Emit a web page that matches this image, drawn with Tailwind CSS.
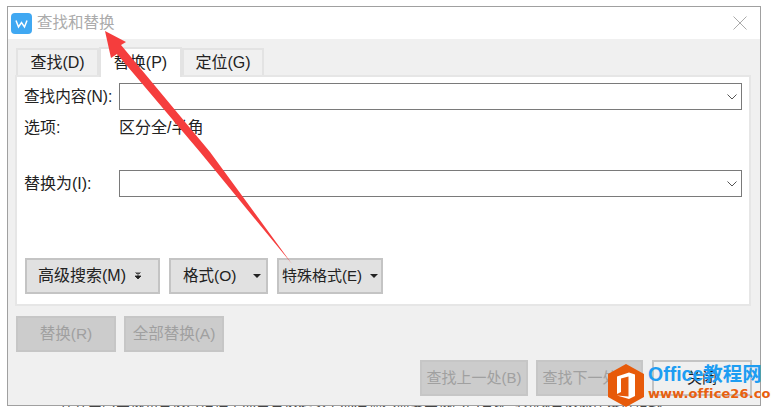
<!DOCTYPE html>
<html lang="zh-CN">
<head>
<meta charset="UTF-8">
<title>查找和替换</title>
<script src="https://cdn.jsdelivr.net/npm/@tailwindcss/browser@4"></script>
</head>
<body class="bg-white">
<div class="relative w-[771px] h-[413px] overflow-hidden pt-[6px] pl-[7px] font-['Liberation_Sans','Noto_Sans_CJK_SC',sans-serif] text-[16px] text-[#222]">

  <!-- dialog -->
  <div class="w-[754px] h-[400px] border border-[#a0a0a0] bg-[#f0f0f0] flex flex-col">
    <!-- title bar -->
    <div class="h-[32px] bg-white flex items-center pl-[3px] pr-[13px] shrink-0">
      <svg class="w-[21px] h-[21px]" viewBox="0 0 21 21">
        <rect width="21" height="21" rx="4" fill="#40a8f2"/>
        <path d="M5 7.5 L7.5 14 L10.5 9.5 L13.5 14 L16 7.5" fill="none" stroke="#fff" stroke-width="1.5"/>
      </svg>
      <span class="ml-[5px] text-[#ababab] text-[15.5px]">查找和替换</span>
      <svg class="ml-auto w-[14px] h-[14px]" viewBox="0 0 14 14">
        <path d="M0.5 0.5 L13.5 13.5 M13.5 0.5 L0.5 13.5" stroke="#aaa" stroke-width="1" fill="none"/>
      </svg>
    </div>

    <!-- tabs -->
    <div class="flex pl-[8px] mt-[8px] h-[28px] shrink-0">
      <div class="w-[83px] mt-[1px] bg-[#f0f0f0] border-2 border-b-0 border-[#e3e3e3] flex items-center justify-center">查找(D)</div>
      <div class="w-[83px] bg-white border-2 border-b-0 border-[#e3e3e3] flex items-center justify-center relative z-10 h-[30px]">替换(P)</div>
      <div class="w-[82px] mt-[1px] bg-[#f0f0f0] border-2 border-b-0 border-[#e3e3e3] flex items-center justify-center">定位(G)</div>
    </div>

    <!-- tab panel -->
    <div class="ml-[7px] w-[736px] h-[231px] bg-white border-2 border-[#e6e6e6] pl-[7px] pr-[7px] pt-[6px] shrink-0">
      <div class="flex items-center h-[27px]">
        <span class="w-[95px] shrink-0 whitespace-nowrap text-[15.6px]">查找内容(N):</span>
        <div class="flex-1 h-full border border-[#7a7a7a] flex items-center justify-end pr-[4px]">
          <svg class="w-[10px] h-[6px]" viewBox="0 0 10 6"><path d="M0.5 0.5 L5 5 L9.5 0.5" fill="none" stroke="#555"/></svg>
        </div>
      </div>
      <div class="flex items-center h-[20px] mt-[8px]">
        <span class="w-[95px] shrink-0">选项:</span>
        <span>区分全/半角</span>
      </div>
      <div class="flex items-center h-[27px] mt-[32px]">
        <span class="w-[95px] shrink-0">替换为(I):</span>
        <div class="flex-1 h-full border border-[#7a7a7a] flex items-center justify-end pr-[4px]">
          <svg class="w-[10px] h-[6px]" viewBox="0 0 10 6"><path d="M0.5 0.5 L5 5 L9.5 0.5" fill="none" stroke="#555"/></svg>
        </div>
      </div>
      <div class="flex mt-[61px] gap-[9px] pl-[1px] h-[36px]">
        <div class="w-[135px] bg-[#e1e1e1] border-2 border-[#c4c4c4] flex items-center pl-[11px]">
          <span class="whitespace-nowrap">高级搜索(M)</span>
          <svg class="w-[6px] h-[7px] ml-[9px] mb-[2px]" viewBox="0 0 6 7"><path d="M0 0 H6 M1 1.5 H5 M2 3 H4 M0 4 H6 L3 7 Z" stroke="#222" stroke-width="0.8" fill="#222"/></svg>
        </div>
        <div class="w-[99px] bg-[#e1e1e1] border-2 border-[#c4c4c4] flex items-center pl-[12px]">
          <span class="text-[15.5px] whitespace-nowrap">格式(O)</span>
          <svg class="w-[8px] h-[4px] ml-[17px]" viewBox="0 0 8 4"><path d="M0 0 H8 L4 4 Z" fill="#222"/></svg>
        </div>
        <div class="w-[106px] bg-[#e1e1e1] border-2 border-[#c4c4c4] flex items-center pl-[3px]">
          <span class="text-[15px] whitespace-nowrap">特殊格式(E)</span>
          <svg class="w-[8px] h-[4px] ml-[8px]" viewBox="0 0 8 4"><path d="M0 0 H8 L4 4 Z" fill="#222"/></svg>
        </div>
      </div>
    </div>

    <!-- lower buttons -->
    <div class="flex gap-[8px] pl-[8px] mt-[10px] h-[36px] shrink-0 text-[#a0a0a0] text-[15.5px]">
      <div class="w-[100px] bg-[#cccccc] border-2 border-[#c6c6c6] flex items-center justify-center">替换(R)</div>
      <div class="w-[100px] bg-[#cccccc] border-2 border-[#c6c6c6] flex items-center justify-center">全部替换(A)</div>
    </div>
    <div class="flex justify-end pr-[8px] mt-[8px] h-[36px] shrink-0 text-[#a0a0a0] text-[15px]">
      <div class="w-[108px] bg-[#cccccc] border-2 border-[#c6c6c6] flex items-center justify-center whitespace-nowrap">查找上一处(B)</div>
      <div class="w-[107px] ml-[8px] bg-[#cccccc] border-2 border-[#c6c6c6] flex items-center justify-center whitespace-nowrap">查找下一处(F)</div>
      <div class="w-[100px] ml-[9px] bg-[#f0f0f0] border-2 border-[#c4c4c4] flex items-center justify-center text-[#222]">关闭</div>
    </div>
  </div>

  <!-- text of the page behind, only its lowest pixels show under the dialog -->
  <div class="absolute left-[60px] top-[392px] h-[15px] overflow-hidden text-[14px] leading-[18px] text-[#444] whitespace-nowrap -z-10">在弹出的查找和替换对话框中点击替换选项卡然后输入需要查找的内容即可完成替换操作设置格式</div>

  <!-- red annotation arrow -->
  <svg class="absolute left-0 top-0 pointer-events-none z-20" width="771" height="413" viewBox="0 0 771 413">
    <polygon points="105,31 126,42 121,45 210,152 292,264 200,152 117,54 111,58" fill="#f53d3d"/>
  </svg>

  <!-- watermark -->
  <div class="absolute left-[608px] top-[364px] z-30 flex">
    <svg width="36" height="44" viewBox="0 0 36 44">
      <polygon points="18,0 36,10 36,33 18,43 0,33 0,10" fill="#e75a0a"/>
      <path d="M9 12.5 L21 8.5 L27 10.5 V32 L21 35 L9 31.5 L20.5 32.5 V12.5 L13 14.5 V28 L9 30 Z" fill="#fff"/>
    </svg>
    <div class="ml-[4px] font-bold whitespace-nowrap">
      <div class="text-[#1e9df2] text-[19.5px] leading-[22px] mt-[-1px]">Office教程网</div>
      <div class="text-[#e8600f] text-[13px] leading-[14px] mt-[2px] tracking-[0.1px] font-['DejaVu_Sans',sans-serif]">www.office26.com</div>
    </div>
  </div>
</div>
</body>
</html>
